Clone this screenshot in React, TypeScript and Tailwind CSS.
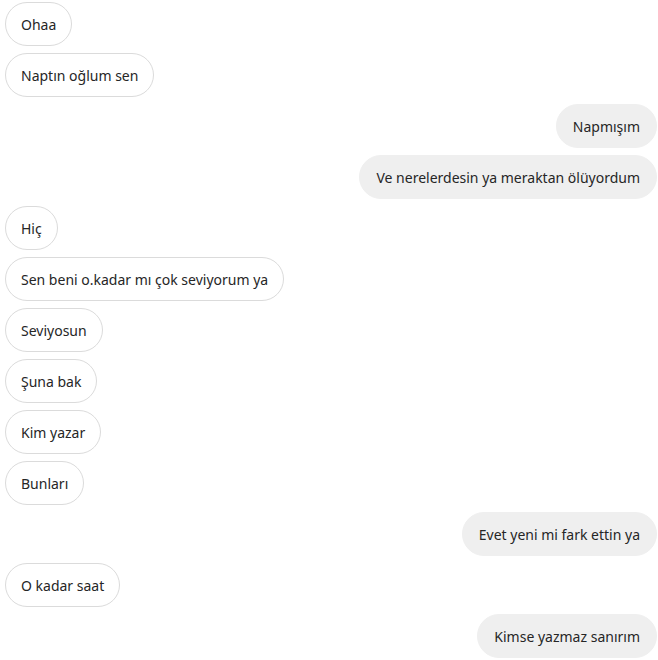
import React from "react";

const msgs: [string, boolean][] = [
  ["Ohaa", false],
  ["Naptın oğlum sen", false],
  ["Napmışım", true],
  ["Ve nerelerdesin ya meraktan ölüyordum", true],
  ["Hiç", false],
  ["Sen beni o.kadar mı çok seviyorum ya", false],
  ["Seviyosun", false],
  ["Şuna bak", false],
  ["Kim yazar", false],
  ["Bunları", false],
  ["Evet yeni mi fark ettin ya", true],
  ["O kadar saat", false],
  ["Kimse yazmaz sanırım", true],
];

export default function App() {
  return (
    <div
      className="w-[658px] h-[660px] bg-white overflow-hidden flex flex-col gap-[7px] pl-[5px] pr-[1px] pt-[2px]"
      style={{ fontFamily: '"Noto Sans", "Open Sans", sans-serif' }}
    >
      {msgs.map(([t, me], i) => (
        <div key={i} className={`flex ${me ? "justify-end" : "justify-start"}`}>
          <div
            className={
              me
                ? "h-[44px] px-[16px] rounded-[22px] flex items-center bg-[#efefef] border border-[#efefef] text-[14px] text-[#262626]"
                : "h-[44px] px-[15px] rounded-[22px] flex items-center bg-white border border-[#dbdbdb] text-[14px] text-[#262626]"
            }
          >
            {t}
          </div>
        </div>
      ))}
    </div>
  );
}
